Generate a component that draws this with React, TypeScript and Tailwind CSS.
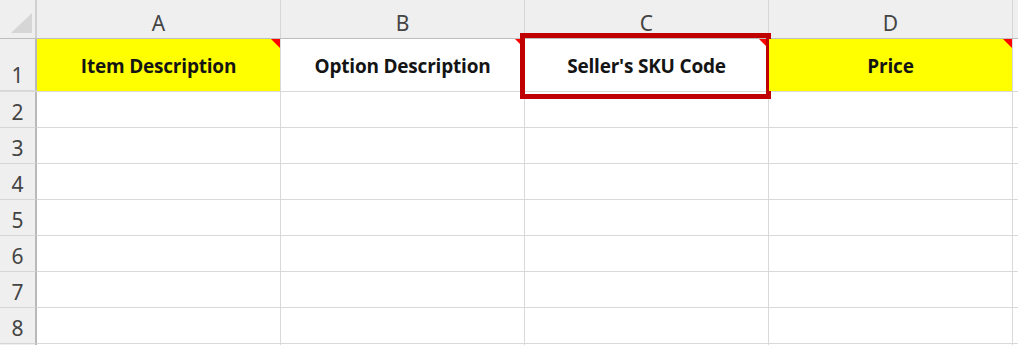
const columns = [
  { letter: "A", title: "Item Description", fill: "bg-[#ffff00]" },
  { letter: "B", title: "Option Description", fill: "bg-white" },
  { letter: "C", title: "Seller's SKU Code", fill: "bg-white", highlight: true },
  { letter: "D", title: "Price", fill: "bg-[#ffff00]" },
];

const emptyRows = [2, 3, 4, 5, 6, 7, 8, 9];

function CommentMark() {
  return (
    <svg className="absolute top-0 right-0" width="9" height="9" viewBox="0 0 9 9">
      <polygon points="0,0 9,0 9,9" fill="#ff0000" />
    </svg>
  );
}

function RowHeader({ n, height }: { n: number; height: string }) {
  return (
    <div
      className={`${height} w-[37px] shrink-0 flex items-end justify-center pb-[3px] bg-[#efefef] border-r-2 border-r-[#b9b9b9] border-b border-b-[#d6d6d6] text-[21px] leading-[24px] text-[#444]`}
    >
      {n < 9 ? n : ""}
    </div>
  );
}

export default function App() {
  return (
    <div className="w-[1018px] h-[345px] overflow-hidden bg-white font-['Noto_Sans',sans-serif] select-none">
      {/* column headers */}
      <div className="flex h-[39px] bg-[#efefef] border-b border-b-[#bdbdbd]">
        <div className="relative w-[37px] shrink-0 border-r-2 border-r-[#d0d0d0]">
          <svg className="absolute left-[11px] top-[13px]" width="21" height="20" viewBox="0 0 21 20">
            <polygon points="21,0 21,20 0,20" fill="#d6d6d6" />
          </svg>
        </div>
        {columns.map((c) => (
          <div
            key={c.letter}
            className="w-[244px] shrink-0 flex items-end justify-center pb-[3px] border-r border-r-[#d6d6d6] text-[21px] leading-[24px] text-[#444]"
          >
            {c.letter}
          </div>
        ))}
        <div className="flex-1" />
      </div>

      {/* row 1: titles */}
      <div className="flex h-[53px] border-b border-b-[#d9d9d9]">
        <RowHeader n={1} height="h-[52px]" />
        {columns.map((c) => (
          <div
            key={c.letter}
            className={`relative w-[244px] shrink-0 flex items-center justify-center pt-[2px] border-r border-r-[#d9d9d9] ${c.fill} font-['Open_Sans',sans-serif] font-bold text-[19px] tracking-[-0.2px] text-[#141414]`}
          >
            {c.title}
            <CommentMark />
            {c.highlight && (
              <div className="absolute left-[-5px] top-[-6px] right-[-3px] bottom-[-8px] border-[5px] border-[#c00000] pointer-events-none" />
            )}
          </div>
        ))}
        <div className="flex-1" />
      </div>

      {/* empty rows */}
      {emptyRows.map((n) => (
        <div key={n} className="flex h-[36px]">
          <RowHeader n={n} height="h-[36px]" />
          {columns.map((c) => (
            <div key={c.letter} className="w-[244px] shrink-0 border-r border-b border-[#d9d9d9]" />
          ))}
          <div className="flex-1 border-b border-[#d9d9d9]" />
        </div>
      ))}
    </div>
  );
}
